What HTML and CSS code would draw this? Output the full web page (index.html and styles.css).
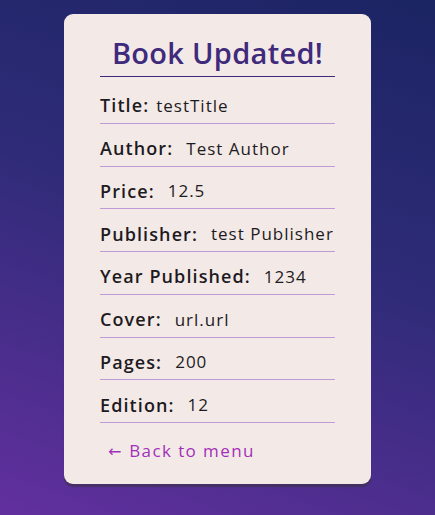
FILE: index.html
```html
<!DOCTYPE html>
<html lang="en">
<head>
<meta charset="utf-8">
<title>Book Updated</title>
<link rel="stylesheet" href="styles.css">
</head>
<body>
<main class="card">
  <h1 class="card-title">Book Updated!</h1>
  <ul class="details">
    <li class="row"><span class="label">Title:</span> <span class="value tight">testTitle</span></li>
    <li class="row"><span class="label">Author:</span> <span class="value">Test Author</span></li>
    <li class="row"><span class="label">Price:</span> <span class="value">12.5</span></li>
    <li class="row"><span class="label">Publisher:</span> <span class="value">test Publisher</span></li>
    <li class="row"><span class="label">Year Published:</span> <span class="value">1234</span></li>
    <li class="row"><span class="label">Cover:</span> <span class="value">url.url</span></li>
    <li class="row"><span class="label">Pages:</span> <span class="value">200</span></li>
    <li class="row"><span class="label">Edition:</span> <span class="value">12</span></li>
  </ul>
  <a class="back" href="#"><span class="arrow">&larr;</span> Back to menu</a>
</main>
</body>
</html>
```
FILE: styles.css
```css
html, body {
  margin: 0;
  height: 100%;
}
body {
  background: linear-gradient(200deg, #1b2463 0%, #2f2b78 45%, #62309e 100%);
  font-family: "Open Sans", "Noto Sans", sans-serif;
  padding-top: 14px;
  box-sizing: border-box;
}
.card {
  width: 307px;
  margin: 0 auto;
  box-sizing: border-box;
  background: #f3eae8;
  border-radius: 9px;
  padding: 16px 36px 21px;
  box-shadow: 0 3px 1px rgba(60, 50, 70, 0.6);
}
.card-title {
  margin: 0;
  text-align: center;
  color: #3f2a7c;
  font-size: 29px;
  font-weight: 600;
  line-height: 46px;
  letter-spacing: 0.3px;
  border-bottom: 1.5px solid #3f2a7c;
  padding-bottom: 0;
}
.details {
  list-style: none;
  margin: 4px 0 0;
  padding: 0;
}
.row {
  border-bottom: 1px solid #c09ad8;
  height: 42.75px;
  padding-top: 7px;
  box-sizing: border-box;
  display: flex;
  align-items: center;
  white-space: nowrap;
  color: #1e1a22;
  font-size: 17px;
  letter-spacing: 1px;
}
.label {
  font-size: 18px;
  font-weight: 600;
  letter-spacing: 1.1px;
  margin-right: 13px;
}
.value {
  font-weight: 400;
}
.value.tight {
  margin-left: -6px;
}
.back {
  display: inline-block;
  margin: 16px 0 0 8px;
  color: #a330b8;
  text-decoration: none;
  font-size: 17px;
  line-height: 23px;
  letter-spacing: 1.4px;
}
.arrow {
  font-family: "DejaVu Sans", sans-serif;
  font-size: 16px;
  letter-spacing: 0;
  margin-right: 2px;
}
```
